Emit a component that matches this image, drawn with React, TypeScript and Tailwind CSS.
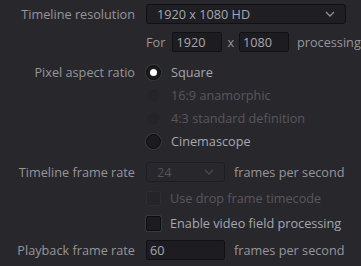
const font = { fontFamily: '"Open Sans", "Noto Sans", sans-serif' };

function Chevron({ dim }: { dim?: boolean }) {
  return (
    <svg width="10" height="6" viewBox="0 0 10 6" className="shrink-0">
      <path
        d="M1 1 L5 5 L9 1"
        fill="none"
        stroke={dim ? "#4a4a50" : "#8f8f95"}
        strokeWidth="1.3"
      />
    </svg>
  );
}

function Radio({ checked, disabled }: { checked?: boolean; disabled?: boolean }) {
  if (disabled) {
    return <span className="w-[15px] h-[15px] rounded-full bg-[#252429] border border-[#2c2b30] shrink-0" />;
  }
  return (
    <span className="w-[15px] h-[15px] rounded-full bg-[#1b1b1d] border border-[#0c0c0d] shadow-[0_0_0_1px_#3a393e] flex items-center justify-center shrink-0">
      {checked && <span className="w-[7px] h-[7px] rounded-full bg-white" />}
    </span>
  );
}

function Check({ disabled }: { disabled?: boolean }) {
  if (disabled) {
    return <span className="w-[15px] h-[15px] rounded-[2px] bg-[#252429] border border-[#2e2d32] shrink-0" />;
  }
  return <span className="w-[15px] h-[15px] rounded-[2px] bg-[#1c1b1f] border border-[#0c0c0d] shadow-[0_0_0_1px_#3a393e] shrink-0" />;
}

function Row({ label, className, children }: { label?: string; className: string; children: React.ReactNode }) {
  return (
    <div className={`flex items-center ${className}`}>
      <div className="w-[136px] pr-[1px] text-right text-[#96969b] shrink-0">{label}</div>
      <div className="flex items-center pl-[10px] whitespace-nowrap">{children}</div>
    </div>
  );
}

export default function App() {
  return (
    <div className="w-[361px] h-[266px] bg-[#28272c] overflow-hidden text-[12.7px] leading-none" style={font}>
      <Row label="Timeline resolution" className="mt-[4px] h-[20px]">
        <div className="w-[200px] h-[20px] rounded-[3px] bg-[#1f1e23] border border-[#111113] flex items-center justify-between pl-[10px] pr-[10px] text-[#a6a8b0]">
          <span>1920 x 1080 HD</span>
          <Chevron />
        </div>
      </Row>

      <Row className="mt-[8px] h-[20px]">
        <span className="text-[#96969b] mr-[7px]">For</span>
        <div className="w-[50px] h-[20px] rounded-[2px] bg-[#1d1c21] border border-[#111113] flex items-center pl-[3px] text-[#a6a8b0]">1920</div>
        <span className="text-[#96969b] mx-[5px]">x</span>
        <div className="w-[50px] h-[20px] rounded-[2px] bg-[#1d1c21] border border-[#111113] flex items-center pl-[3px] text-[#a6a8b0]">1080</div>
        <span className="text-[#96969b] ml-[8px]">processing</span>
      </Row>

      <Row label="Pixel aspect ratio" className="mt-[9px] h-[23px]">
        <Radio checked />
        <span className="ml-[10px] text-[#a6a8b0]">Square</span>
      </Row>
      <Row className="h-[23px]">
        <Radio disabled />
        <span className="ml-[10px] text-[#58575d]">16:9 anamorphic</span>
      </Row>
      <Row className="h-[23px]">
        <Radio disabled />
        <span className="ml-[10px] text-[#58575d]">4:3 standard definition</span>
      </Row>
      <Row className="h-[23px]">
        <Radio />
        <span className="ml-[10px] text-[#a6a8b0]">Cinemascope</span>
      </Row>

      <Row label="Timeline frame rate" className="mt-[9px] h-[20px]">
        <div className="w-[79px] h-[20px] rounded-[3px] border border-[#1e1d22] flex items-center justify-between pl-[10px] pr-[10px] text-[#55545a]">
          <span>24</span>
          <Chevron dim />
        </div>
        <span className="ml-[9px] text-[#96969b]">frames per second</span>
      </Row>

      <Row className="mt-[4px] h-[24px]">
        <Check disabled />
        <span className="ml-[9px] text-[#58575d]">Use drop frame timecode</span>
      </Row>
      <Row className="mt-[1px] h-[24px]">
        <Check />
        <span className="ml-[9px] text-[#a6a8b0]">Enable video field processing</span>
      </Row>

      <Row label="Playback frame rate" className="mt-[5px] h-[20px]">
        <div className="w-[79px] h-[20px] rounded-[2px] bg-[#1d1c21] border border-[#111113] flex items-center pl-[3px] text-[#a6a8b0]">60</div>
        <span className="ml-[9px] text-[#96969b]">frames per second</span>
      </Row>
    </div>
  );
}
